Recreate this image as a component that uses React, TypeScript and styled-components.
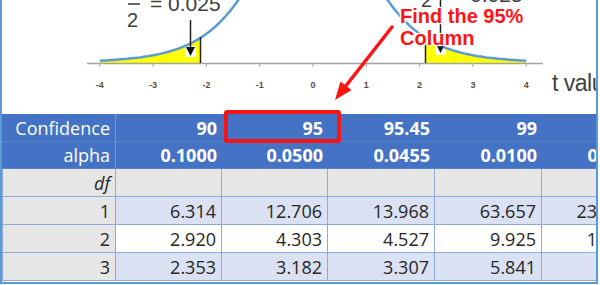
import React from 'react';
import styled, { createGlobalStyle, css } from 'styled-components';

const GlobalStyle = createGlobalStyle`
  html, body {
    margin: 0;
    padding: 0;
    background: #fff;
  }
  body {
    font-family: "Open Sans", "Liberation Sans", sans-serif;
  }
`;

const Page = styled.div`
  position: relative;
  width: 600px;
  height: 285px;
  overflow: hidden;
  background: #fff;
`;

const Frame = styled.div`
  width: 598px;
  box-sizing: border-box;
  border: 2px solid #5b9bd5;
  border-top: none;
  padding-bottom: 1px;
  overflow: hidden;
`;

const Chart = styled.svg`
  display: block;
  width: 594px;
  height: 114px;
  font-family: "Liberation Sans", Arial, sans-serif;
`;

const Table = styled.div`
  display: flex;
  flex-direction: column;
  width: 647px;
`;

const Row = styled.div<{ $h: number }>`
  display: grid;
  grid-template-columns: 114px 106px 106px 107px 107px 107px;
  height: ${(p) => p.$h}px;
`;

type Tone = 'head' | 'label' | 'band' | 'plain';

const tones = {
  head: css`
    background: #4472c4;
    color: #fff;
    border-bottom: 1px solid #5a82cb;
    &:first-child {
      border-right: 1px solid #7896d4;
    }
  `,
  label: css`
    background: #e7e6e6;
    color: #262626;
    border-right: 1px solid #8eaadb;
    border-bottom: 1px solid #8eaadb;
    &:first-child {
      box-shadow: inset 1px 0 #8eaadb;
    }
  `,
  band: css`
    background: #d9e1f2;
    color: #262626;
    border-right: 1px solid #8eaadb;
    border-bottom: 1px solid #8eaadb;
  `,
  plain: css`
    background: #fff;
    color: #262626;
    border-right: 1px solid #8eaadb;
    border-bottom: 1px solid #8eaadb;
  `,
};

const Cell = styled.div<{ $tone: Tone; $bold?: boolean; $italic?: boolean }>`
  display: flex;
  align-items: center;
  justify-content: flex-end;
  box-sizing: border-box;
  padding-right: 5px;
  font-size: 18px;
  white-space: nowrap;
  font-weight: ${(p) => (p.$bold ? 700 : 400)};
  font-style: ${(p) => (p.$italic ? 'italic' : 'normal')};
  ${(p) => tones[p.$tone]}
`;

const Highlight = styled.div`
  position: absolute;
  left: 224px;
  top: 110px;
  width: 117px;
  height: 33px;
  box-sizing: border-box;
  border: 4px solid #f21616;
  border-radius: 3px;
`;

const Callout = styled.div`
  position: absolute;
  left: 400px;
  top: 5px;
  font-family: "Liberation Sans", Arial, sans-serif;
  font-weight: 700;
  font-size: 20px;
  line-height: 22px;
  color: #ff1414;
  text-shadow: -1px -1px 0 #fff, 1px -1px 0 #fff, -1px 1px 0 #fff, 1px 1px 0 #fff,
    0 0 3px #fff, 0 0 3px #fff;
`;

const Overlay = styled.svg`
  position: absolute;
  left: 0;
  top: 0;
  width: 600px;
  height: 285px;
  pointer-events: none;
`;

// t distribution (df = 5) drawn over the axis
const X0 = 313;
const UNIT = 53.3;
const AXIS = 63;
const SCALE = 448;
const pdf = (t: number) => 0.3796 * Math.pow(1 + (t * t) / 5, -3);
const pt = (t: number) => [X0 + UNIT * t, AXIS - SCALE * pdf(t)] as const;

const curve = (() => {
  const out: string[] = [];
  for (let t = -4; t <= 4.0001; t += 0.05) {
    const [x, y] = pt(t);
    out.push(`${out.length ? 'L' : 'M'}${x.toFixed(1)},${y.toFixed(1)}`);
  }
  return out.join(' ');
})();

const tail = (a: number, b: number) => {
  const out: string[] = [`M${(X0 + UNIT * a).toFixed(1)},${AXIS}`];
  for (let t = a; t <= b + 0.0001; t += 0.05) {
    const [x, y] = pt(t);
    out.push(`L${x.toFixed(1)},${y.toFixed(1)}`);
  }
  out.push(`L${(X0 + UNIT * b).toFixed(1)},${AXIS} Z`);
  return out.join(' ');
};

const ticks = [-4, -3, -2, -1, 0, 1, 2, 3, 4];

const confidence = ['90', '95', '95.45', '99', '99.73'];
const alpha = ['0.1000', '0.0500', '0.0455', '0.0100', '0.0027'];
const rows = [
  { df: '1', values: ['6.314', '12.706', '13.968', '63.657', '235.784'] },
  { df: '2', values: ['2.920', '4.303', '4.527', '9.925', '19.206'] },
  { df: '3', values: ['2.353', '3.182', '3.307', '5.841', '9.219'] },
];

const TChart: React.FC = () => (
  <Chart viewBox="2 0 594 114">
    <path d={tail(-4, -2.1)} fill="#ffff00" />
    <path d={tail(2.1, 4)} fill="#ffff00" />
    <rect x={185} y={46} width={11} height={11} fill="#fff" />
    <rect x={435} y={44} width={11} height={11} fill="#fff" />
    <line x1={87} y1={63.5} x2={543} y2={63.5} stroke="#a3a3a3" strokeWidth={1.5} />
    {ticks.map((t) => (
      <g key={t}>
        <line x1={X0 + UNIT * t} y1={63} x2={X0 + UNIT * t} y2={67} stroke="#a3a3a3" />
        <text x={X0 + UNIT * t} y={88} fontSize={9} fontWeight={700} fill="#5a4d3c" textAnchor="middle">
          {t}
        </text>
      </g>
    ))}
    <path d={curve} fill="none" stroke="#5b9bd5" strokeWidth={2.5} />
    <line x1={200.5} y1={37} x2={200.5} y2={63} stroke="#222" strokeWidth={1.5} />
    <line x1={425.5} y1={42} x2={425.5} y2={63} stroke="#222" strokeWidth={1.5} />

    <line x1={190.5} y1={20} x2={190.5} y2={48} stroke="#222" strokeWidth={1.5} />
    <polygon points="186,47 195,47 190.5,56" fill="#111" />
    <line x1={440.5} y1={0} x2={440.5} y2={45} stroke="#222" strokeWidth={1.5} />
    <polygon points="436,44 445,44 440.5,53" fill="#111" />

    <line x1={128} y1={4} x2={140} y2={4} stroke="#404040" strokeWidth={1.6} />
    <text x={127} y={27} fontSize={20} fill="#404040">2</text>
    <text x={150} y={11} fontSize={21} fill="#404040">= 0.025</text>
    <text x={421} y={7} fontSize={20} fill="#404040">2</text>
    <text x={452} y={2} fontSize={21} fill="#404040">= 0.025</text>

    <text x={552} y={91} fontSize={23} letterSpacing={-0.5} fill="#404040">t value</text>
  </Chart>
);

const App: React.FC = () => (
  <Page>
    <GlobalStyle />
    <Frame>
      <TChart />
      <Table>
        <Row $h={28}>
          <Cell $tone="head">Confidence</Cell>
          {confidence.map((v) => (
            <Cell key={v} $tone="head" $bold>
              {v}
            </Cell>
          ))}
        </Row>
        <Row $h={27}>
          <Cell $tone="head">alpha</Cell>
          {alpha.map((v) => (
            <Cell key={v} $tone="head" $bold>
              {v}
            </Cell>
          ))}
        </Row>
        <Row $h={28}>
          <Cell $tone="label" $italic>
            df
          </Cell>
          {confidence.map((v) => (
            <Cell key={v} $tone="label" />
          ))}
        </Row>
        {rows.map((r, i) => (
          <Row key={r.df} $h={28}>
            <Cell $tone="label">{r.df}</Cell>
            {r.values.map((v) => (
              <Cell key={v} $tone={i % 2 === 0 ? 'band' : 'plain'}>
                {v}
              </Cell>
            ))}
          </Row>
        ))}
      </Table>
    </Frame>

    <Highlight />
    <Overlay viewBox="0 0 600 285">
      <line x1={392} y1={27} x2={345} y2={87} stroke="#ff1414" strokeWidth={3.5} strokeLinecap="round" />
      <polygon points="335,100 351.5,90 340.5,81.4" fill="#ff1414" />
    </Overlay>
    <Callout>
      Find the 95%
      <br />
      Column
    </Callout>
  </Page>
);

export default App;
